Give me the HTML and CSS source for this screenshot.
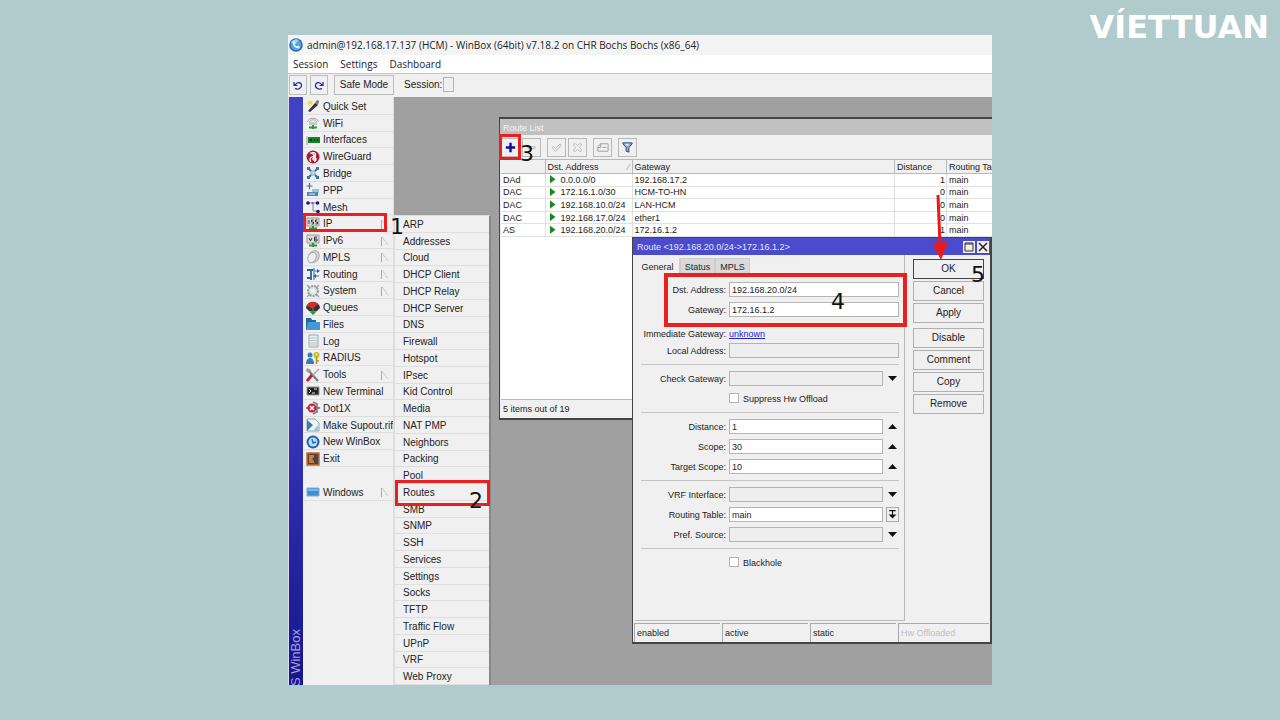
FILE: index.html
```html
<!DOCTYPE html>
<html lang="en">
<head>
<meta charset="utf-8">
<title>WinBox – Static route guide</title>
<link rel="stylesheet" href="styles.css">
</head>
<body>
<div class="brand">VÍETTUAN</div>
<main class="app">
  <header class="titlebar">
    <svg class="app-icon" viewBox="0 0 14 14"><circle cx="7" cy="7" r="6.8" fill="#2470b8"/><circle cx="7" cy="7" r="5.2" fill="#5aa4e2"/><path d="M2 4a6 6 0 0 1 8-2L5 7z" fill="#9fd0f5"/><path d="M4 3.500c-.5 4 2 7 6 7l1-1.500-2-1.500-1 1C6.500 8 6 7 5.500 6l1-1L5.500 3z" fill="#e8f5ff"/></svg>
    <span>admin@192.168.17.137 (HCM) - WinBox (64bit) v7.18.2 on CHR Bochs Bochs (x86_64)</span>
  </header>
  <nav class="menubar"><button>Session</button><button>Settings</button><button>Dashboard</button></nav>
  <div class="toolbar">
    <button class="tool" aria-label="Undo"><svg viewBox="0 0 14 14"><path d="M4 10.500C7 12 11 10 10.500 7S6 3.500 4 7M3 4v3.500h3.500" fill="none" stroke="#2222a8" stroke-width="1.200"/></svg></button>
    <button class="tool" aria-label="Redo"><svg viewBox="0 0 14 14"><path d="M10 10.500C7 12 3 10 3.500 7S8 3.500 10 7M11 4v3.500H7.500" fill="none" stroke="#2222a8" stroke-width="1.200"/></svg></button>
    <button class="safe">Safe Mode</button>
    <label class="session">Session:<input readonly></label>
  </div>
  <div class="workspace">
    <aside class="stripe"><span>RouterOS WinBox</span></aside>
    <nav class="sidebar">
      <button><svg viewBox="0 0 14 14"><path d="M2 12L9 4l3 2-8 7z" fill="#333"/><path d="M9 4l2-3 2 1-1 4z" fill="#777"/><path d="M4 1v6M1 4h6M2 2l4 4M6 2L2 6" stroke="#e6dc3c"/></svg>Quick Set</button>
      <button><svg viewBox="0 0 14 14"><path d="M1.500 6C2 1 12 1 12.500 6M3.500 6c.5-3 6.500-3 7 0" fill="none" stroke="#aaa"/><path d="M3 6h8v3H3z" fill="#c8caca"/><path d="M3 11.500h8M7 9v4" stroke="#299a36" stroke-width="2"/></svg>WiFi</button>
      <button><svg viewBox="0 0 14 14"><path d="M1 3v9" stroke="#999"/><path d="M2 4h12v6H2z" fill="#168221"/><path d="M4 6h2v2H4zm4 0h1v2H8zm3 0h1v2h-1z" fill="#073c0b"/></svg>Interfaces</button>
      <button><svg viewBox="0 0 14 14"><circle cx="7" cy="7" r="6.500" fill="#a91b32"/><path d="M5 12c-2-2-1-4 1-5s3-2 1-3L5 3c3-1 5 0 4.500 2.500S6 8 7 9.500s3-.5 2-2c2 1 1 4-1 4" fill="none" stroke="#fff" stroke-width="1.300"/></svg>WireGuard</button>
      <button><svg viewBox="0 0 14 14"><path d="M2 2l3 3M12 2L9 5M2 12l3-3M12 12L9 9" stroke="#315f91" stroke-width="1.800"/><path d="M1 1h3v3H1zM10 1h3v3h-3zM1 10h3v3H1zM10 10h3v3h-3z" fill="#3f74a8"/><path d="M5 5h4v4H5z" fill="#c3d6e6" stroke="#86aed0"/></svg>Bridge</button>
      <button><svg viewBox="0 0 14 14"><path d="M3.500 0v6M.500 3h6" stroke="#3773a8" stroke-width="1.200"/><path d="M6 6h7v4H6z" fill="#9fc0d8"/><path d="M1 9h11v4H1z" fill="#5289b3"/><path d="M3 11h6" stroke="#dceaf4"/></svg>PPP</button>
      <button><svg viewBox="0 0 14 14"><path d="M2 3h9M7 3v8h5" fill="none" stroke="#888"/><circle cx="2" cy="3" r="1.800" fill="#15158c"/><circle cx="11.500" cy="3" r="1.800" fill="#15158c"/><circle cx="12" cy="11.500" r="1.800" fill="#15158c"/><circle cx="6.500" cy="3" r="1" fill="#5d5dae"/></svg>Mesh</button>
      <button><svg viewBox="0 0 14 14"><path d="M1 1h12v8H1z" fill="#ddd" stroke="#999"/><path d="M3 3v4M7.500 3h-2v2h2v2h-2M11.500 3h-2v2h2v2h-2" fill="none" stroke="#333"/><path d="M3 11.500h8M7 9v4" stroke="#299a36" stroke-width="2"/></svg>IP<i class="more"></i></button>
      <button><svg viewBox="0 0 14 14"><path d="M1 1h12v8H1z" fill="#ddd" stroke="#999"/><path d="M3 4l1.500 3L6 4M11 3H8.500v4H11V5H8.500" fill="none" stroke="#333"/><path d="M3 11.500h8M7 9v4" stroke="#299a36" stroke-width="2"/></svg>IPv6<i class="more"></i></button>
      <button><svg viewBox="0 0 14 14"><ellipse cx="8" cy="6.500" rx="5" ry="6" transform="rotate(25 8 6.500)" fill="#d2d7d8" stroke="#aaa"/><ellipse cx="6" cy="7.500" rx="4" ry="5.500" transform="rotate(25 6 7.500)" fill="#eee" stroke="#a6adad"/></svg>MPLS<i class="more"></i></button>
      <button><svg viewBox="0 0 14 14"><path d="M5 13V3M1 3h7M5 11H1" stroke="#29659c" stroke-width="1.800"/><path d="M8 1v12M8 4h5M13 9H8" stroke="#6f9fc4" stroke-width="1.600"/><path d="M11 2l3 2-3 2M10 7L7 9l3 2" fill="#29659c"/></svg>Routing<i class="more"></i></button>
      <button><svg viewBox="0 0 14 14"><circle cx="7" cy="7" r="5" fill="#d8e2e3" stroke="#8e9d9e" stroke-width="2" stroke-dasharray="2 1"/><path d="M1 1l3 3M13 1l-3 3M1 13l3-3M13 13l-3-3" stroke="#9ba9aa" stroke-width="1.500"/><circle cx="7" cy="7" r="2.500" fill="#f0f0f0"/></svg>System<i class="more"></i></button>
      <button><svg viewBox="0 0 14 14"><path d="M0 7a7 6 0 0 1 14 0l-3 3H3z" fill="#333"/><path d="M1 5a6 5 0 0 1 11-2L7 8z" fill="#d02c32"/><path d="M7 8v3M5 11l2 2 2-2z" fill="#279633" stroke="#279633" stroke-width="1.500"/></svg>Queues</button>
      <button><svg viewBox="0 0 14 14"><path d="M0 1h5l1 2h4v10H0z" fill="#1e68a6"/><path d="M2 5h12v8H0z" fill="#4698d6"/></svg>Files</button>
      <button><svg viewBox="0 0 14 14"><path d="M3 1h9v12H3z" fill="#e6efef" stroke="#9ba7a7"/><path d="M4 4h7M4 6.500h7M4 9h7M4 11h7" stroke="#b4c7c9"/></svg>Log</button>
      <button><svg viewBox="0 0 14 14"><circle cx="4" cy="4" r="2.500" fill="#377ebd"/><path d="M0 13c0-8 8-8 8 0z" fill="#377ebd"/><circle cx="10.500" cy="4" r="3" fill="#d1b82a"/><path d="M10.500 6v7M11 10h2" stroke="#b49918" stroke-width="1.600"/><circle cx="10.500" cy="3.500" r="1" fill="#fff6ae"/></svg>RADIUS</button>
      <button><svg viewBox="0 0 14 14"><path d="M2 2l10 11" stroke="#777" stroke-width="2"/><path d="M13 1L6 8" stroke="#aaa" stroke-width="1.600"/><path d="M6 7l-5 6" stroke="#b71e38" stroke-width="2.800"/><path d="M1 0l4 2-2 3-3-2z" fill="#999"/></svg>Tools<i class="more"></i></button>
      <button><svg viewBox="0 0 14 14"><path d="M1 3h12v8H1z" fill="#222" stroke="#999"/><path d="M3 5l2 2-2 2M6 9h3M8 5h3" fill="none" stroke="#ddd"/></svg>New Terminal</button>
      <button><svg viewBox="0 0 14 14"><path d="M0 7h14M7 1l4 2v8l-4 2" fill="none" stroke="#7d8587" stroke-width="1.800"/><circle cx="6" cy="7" r="4.500" fill="#c82336"/><path d="M4 5l4 4M8 5L4 9" stroke="#fff" stroke-width="1.500"/></svg>Dot1X</button>
      <button><svg viewBox="0 0 14 14"><path d="M1 1h8l4 4v8H1z" fill="#edf5f8" stroke="#91a6b0"/><path d="M1 2l6 5-6 6z" fill="#337cb3"/><path d="M7 13l5-6v6z" fill="#9fc3da"/></svg>Make Supout.rif</button>
      <button><svg viewBox="0 0 14 14"><circle cx="7" cy="7" r="6.500" fill="#1e62a9"/><circle cx="7" cy="7" r="4.500" fill="#b8ddf6"/><path d="M6 4l1 4 3-1" fill="none" stroke="#2471b6" stroke-width="1.400"/></svg>New WinBox</button>
      <button><svg viewBox="0 0 14 14"><path d="M1 1h12v12H1z" fill="#6b3c26" stroke="#ba713c" stroke-width="1.500"/><path d="M3 3h5v8H3z" fill="#d17c32"/><path d="M6 7l4-4v2h2v4h-2v2z" fill="#1c5277"/></svg>Exit</button>
      <span></span>
      <button><svg viewBox="0 0 14 14"><path d="M1 3h12v8H1z" fill="#3991d4" stroke="#8aaec8"/><path d="M2 4h10v2H2z" fill="#72bdf0"/></svg>Windows<i class="more"></i></button>
    </nav>

    <section class="window route-list">
      <h2>Route List</h2>
      <div class="list-tools">
        <button aria-label="Add"><svg viewBox="0 0 14 14"><path d="M7 2v10M2 7h10" stroke="#0b0ba0" stroke-width="2.600"/></svg></button>
        <button aria-label="Remove"><svg viewBox="0 0 14 14"><path d="M3 6h8v2H3z" fill="none" stroke="#bbb"/></svg></button>
        <button class="apart" aria-label="Enable"><svg viewBox="0 0 14 14"><path d="M2 7l2-1 2 2 5-5 1 2-6 6z" fill="none" stroke="#bbb"/></svg></button>
        <button aria-label="Disable"><svg viewBox="0 0 14 14"><path d="M3 3h2l2 2 2-2h2v2L9 7l2 2v2H9L7 9l-2 2H3V9l2-2-2-2z" fill="none" stroke="#bbb"/></svg></button>
        <button class="apart" aria-label="Comment"><svg viewBox="0 0 14 14"><path d="M5 3h8v8H2V6zM5 3v4H2M7 7h4" fill="none" stroke="#999"/></svg></button>
        <button class="apart" aria-label="Filter"><svg viewBox="0 0 14 14"><path d="M2 2h10v1L8.500 7v5l-3-1V7L2 3z" fill="#93a9cb" stroke="#294471"/><path d="M4 3h5L7 6z" fill="#d7e6f6"/></svg></button>
      </div>
      <table>
        <colgroup><col class="c-flag"><col class="c-dst"><col class="c-gw"><col class="c-dist"><col class="c-table"></colgroup>
        <thead><tr><th></th><th>Dst. Address<i class="sort">∕</i></th><th>Gateway</th><th>Distance</th><th>Routing Table</th></tr></thead>
        <tbody>
          <tr><td>DAd</td><td><i class="play"></i>0.0.0.0/0</td><td>192.168.17.2</td><td>1</td><td>main</td></tr>
          <tr><td>DAC</td><td><i class="play"></i>172.16.1.0/30</td><td>HCM-TO-HN</td><td>0</td><td>main</td></tr>
          <tr><td>DAC</td><td><i class="play"></i>192.168.10.0/24</td><td>LAN-HCM</td><td>0</td><td>main</td></tr>
          <tr><td>DAC</td><td><i class="play"></i>192.168.17.0/24</td><td>ether1</td><td>0</td><td>main</td></tr>
          <tr><td>AS</td><td><i class="play"></i>192.168.20.0/24</td><td>172.16.1.2</td><td>1</td><td>main</td></tr>
        </tbody>
      </table>
      <div class="list-body"></div>
      <footer>5 items out of 19</footer>
    </section>

    <section class="window dialog">
      <header><h2>Route &lt;192.168.20.0/24-&gt;172.16.1.2&gt;</h2>
        <button aria-label="Maximize"><svg viewBox="0 0 12 12"><path d="M2 2h8v8H2zM2 3h8" fill="none" stroke="#333"/></svg></button>
        <button aria-label="Close"><svg viewBox="0 0 12 12"><path d="M2 2l8 8M10 2l-8 8" stroke="#222" stroke-width="1.500"/></svg></button>
      </header>
      <div class="dialog-main">
        <div class="pane">
          <div class="tabs" role="tablist"><button role="tab" aria-selected="true">General</button><button role="tab">Status</button><button role="tab">MPLS</button></div>
          <form class="form">
            <div class="group">
              <div class="row"><label for="dst">Dst. Address:</label><input class="wide" id="dst" value="192.168.20.0/24"></div>
              <div class="row"><label for="gw">Gateway:</label><input class="wide" id="gw" value="172.16.1.2"></div>
              <div class="row link-row"><span>Immediate Gateway:</span><a href="#">unknown</a></div>
              <div class="row"><label for="local">Local Address:</label><input class="wide off" id="local" readonly></div>
            </div>
            <div class="group">
              <div class="row"><label for="check">Check Gateway:</label><select class="off" id="check"><option></option></select><i class="down"></i></div>
              <div class="row"><input type="checkbox" id="hw"><label class="tick" for="hw">Suppress Hw Offload</label></div>
            </div>
            <div class="group">
              <div class="row"><label for="distance">Distance:</label><input id="distance" value="1"><button type="button" class="up" aria-label="Clear distance"></button></div>
              <div class="row"><label for="scope">Scope:</label><input id="scope" value="30"><button type="button" class="up" aria-label="Clear scope"></button></div>
              <div class="row"><label for="target">Target Scope:</label><input id="target" value="10"><button type="button" class="up" aria-label="Clear target scope"></button></div>
            </div>
            <div class="group">
              <div class="row"><label for="vrf">VRF Interface:</label><select class="off" id="vrf"><option></option></select><i class="down"></i></div>
              <div class="row"><label for="rt">Routing Table:</label><select id="rt"><option>main</option></select><svg class="pick" viewBox="0 0 14 14"><path d="M3 2h8M7 3v5" stroke="#111" stroke-width="1.500"/><path d="M2 7h10l-5 5z" fill="#111"/></svg></div>
              <div class="row"><label for="pref">Pref. Source:</label><select class="off" id="pref"><option></option></select><i class="down"></i></div>
            </div>
            <div class="group">
              <div class="row"><input type="checkbox" id="bh"><label class="tick" for="bh">Blackhole</label></div>
            </div>
          </form>
        </div>
        <div class="actions">
          <button class="default">OK</button><button>Cancel</button><button>Apply</button>
          <button class="split">Disable</button><button>Comment</button><button>Copy</button><button>Remove</button>
        </div>
      </div>
      <footer class="status"><span>enabled</span><span>active</span><span>static</span><span class="dim">Hw Offloaded</span></footer>
    </section>

    <nav class="submenu">
      <button>ARP</button><button>Addresses</button><button>Cloud</button><button>DHCP Client</button><button>DHCP Relay</button><button>DHCP Server</button><button>DNS</button><button>Firewall</button><button>Hotspot</button><button>IPsec</button><button>Kid Control</button><button>Media</button><button>NAT PMP</button><button>Neighbors</button><button>Packing</button><button>Pool</button><button>Routes</button><button>SMB</button><button>SNMP</button><button>SSH</button><button>Services</button><button>Settings</button><button>Socks</button><button>TFTP</button><button>Traffic Flow</button><button>UPnP</button><button>VRF</button><button>Web Proxy</button>
    </nav>

    <div class="mark mark-ip"></div><b class="step step-1">1</b>
    <div class="mark mark-routes"></div><b class="step step-2">2</b>
    <div class="mark mark-add"></div><b class="step step-3">3</b>
    <div class="mark mark-fields"></div><b class="step step-4">4</b>
    <svg class="arrow" viewBox="0 0 18 66"><path d="M7 0l2 50" stroke="#e8191f" stroke-width="3"/><path d="M1 48l16-1-7 18z" fill="#e8191f"/></svg>
    <b class="step step-5">5</b>
  </div>
</main>
</body>
</html>
```
FILE: styles.css
```css
* { box-sizing: border-box; }
body {
  margin: 0;
  min-height: 100vh;
  padding: 35px 0;
  display: flex;
  justify-content: center;
  background: #b1cacb;
  color: #222;
  font: 10px/12px "Liberation Sans", Arial, sans-serif;
}
button, input, select { font: inherit; color: inherit; margin: 0; padding: 0; border: 0; border-radius: 0; background: none; }
i { font-style: normal; }
h2 { margin: 0; font: inherit; }
svg { display: block; }

.brand {
  position: absolute;
  top: 7px;
  right: 11px;
  color: #fff;
  font: bold 32px/40px "DejaVu Sans", sans-serif;
}

.app { width: 55%; display: flex; flex-direction: column; overflow: hidden; background: #f0f0f0; }
.titlebar { height: 20px; display: flex; align-items: center; gap: 4px; padding-left: 1px; background: #f4f4f4; font: 10px/16px "Open Sans", sans-serif; white-space: nowrap; }
.app-icon { width: 14px; height: 14px; }
.menubar { height: 18px; display: flex; gap: 12px; padding-left: 5px; background: #fff; font: 10px/16px "Open Sans", sans-serif; }
.toolbar { height: 24px; display: flex; align-items: center; gap: 3px; padding: 0 0 2px 1px; border-top: 1px solid #c4c4c4; }
.tool, .safe { height: 20px; border: 1px solid #bcbcbc; }
.tool { width: 18px; padding: 1px; }
.safe { width: 60px; margin-left: 3px; }
.session { display: flex; align-items: center; gap: 1px; margin-left: 7px; }
.session input { width: 11px; height: 15px; border: 1px solid #b4b4b4; }

.workspace { position: relative; flex: 1; display: flex; overflow: hidden; background: #a0a0a0; }
.stripe { width: 15px; display: flex; flex-direction: column; align-items: center; overflow: hidden; border-left: 1px solid #dde; background: linear-gradient(#4141c6 0%, #3c3cc0 45%, #15158c 100%); }
.stripe span { margin: auto 0 -50px; writing-mode: vertical-rl; transform: rotate(180deg); color: #a2a2d8; font-size: 13px; line-height: 14px; white-space: nowrap; }

.sidebar { width: 91px; display: grid; grid-template-rows: repeat(35, minmax(0, 1fr)); padding: 1px 0 0 1px; background: #f0f0f0; border-right: 1px solid #ddd; }
.sidebar button, .submenu button { display: flex; align-items: center; padding-top: 2px; text-align: left; white-space: nowrap; border-bottom: 1px solid #dedede; min-height: 0; overflow: hidden; }
.sidebar button { gap: 3px; padding-left: 2px; }
.sidebar svg { width: 14px; height: 14px; flex: none; margin: -2px 0 -1px; }
.more { width: 7px; height: 9px; margin: 0 5px 0 auto; border-left: 1px solid #aaa; background: linear-gradient(55deg, transparent 48%, #bbb 50%, transparent 60%); }
.submenu { position: absolute; left: 106px; top: 118px; bottom: 0; width: 97px; display: grid; grid-auto-rows: minmax(0, 1fr); background: #f0f0f0; border: 1px solid #ddd; border-right: 2px solid #888; border-bottom: 0; }
.submenu button { padding-left: 8px; }

.window { position: absolute; display: flex; flex-direction: column; background: #f0f0f0; border: 1px solid #333; font-size: 9px; }
.route-list { left: 211px; top: 20px; right: -30px; height: 303px; border-width: 2px 1px; border-color: #444; }
.route-list h2 { height: 16px; padding: 3px 3px 0; background: #c0c0c0; color: #f6f6f6; }
.list-tools { height: 24px; display: flex; align-items: center; gap: 2px; padding-left: 1px; }
.list-tools button { width: 19px; height: 19px; border: 1px solid #b8b8b8; padding: 2px; }
.list-tools .apart { margin-left: 4px; }
table { height: 78px; margin-left: 1px; border-collapse: collapse; table-layout: fixed; width: 100%; background: #fff; line-height: 10px; }
.c-flag { width: 44px; }
.c-dst { width: 87px; }
.c-dist { width: 52px; }
.c-table { width: 75px; }
th, td { padding: 0 2px; text-align: left; font-weight: normal; white-space: nowrap; overflow: hidden; border-right: 1px solid #e0dede; border-bottom: 1px solid #e4e0dc; }
th { height: 14px; background: #f0f0f0; border-color: #b8b8b8; border-top: 1px solid #b8b8b8; }
td:nth-child(4) { text-align: right; padding-right: 1px; }
.sort { float: right; color: #999; }
.play { display: inline-block; width: 6px; height: 9px; margin: 0 5px 0 2px; vertical-align: -1px; background: #188a1b; clip-path: polygon(0 0, 100% 50%, 0 100%); }
.list-body { flex: 1; margin-left: 1px; background: #fff; border-bottom: 1px solid #bbb; }
.route-list footer { height: 18px; padding: 3px; }

.dialog { left: 344px; top: 140px; right: 0; height: 407px; border: 1px solid #444; border-width: 1px 2px 2px 1px; }
.dialog > header { height: 17px; display: flex; align-items: center; gap: 2px; padding: 0 1px 0 4px; background: #4b4bcd; color: #e6e6ff; }
.dialog h2 { flex: 1; }
.dialog > header button { width: 12px; height: 12px; background: #eee; }
.dialog-main { flex: 1; display: flex; gap: 8px; padding: 0 6px 0 2px; }
.pane { flex: 1; padding-top: 3px; border-right: 1px solid #bbb; border-bottom: 1px solid #bbb; }
.tabs { height: 16px; display: flex; }
.tabs button { width: 35px; background: #dadada; border: 1px solid #ccc; border-bottom: 0; }
.tabs button:first-child { width: 45px; background: #f0f0f0; border-color: #f0f0f0 #ccc #f0f0f0 #f0f0f0; }
.form { padding: 2px 5px 0 6px; }
.group { display: flex; flex-direction: column; gap: 5px; padding: 6px 0; border-bottom: 1px solid #c4c4c4; }
.group:last-child { border: 0; }
.row { display: grid; grid-template-columns: 85px 1fr 13px; gap: 3px; align-items: center; }
.row > label, .row > span { text-align: right; white-space: nowrap; }
.row input, .row select { width: 100%; min-width: 0; height: 15px; padding: 0 2px; background: #fff; border: 1px solid #b4b4b4; appearance: none; }
.row .wide { grid-column: 2 / 4; }
.row .off { background: #eee; }
.link-row { height: 10px; margin-top: 6px; }
.row a { color: #2222dd; }
.row input[type="checkbox"] { grid-column: 2; grid-row: 1; width: 10px; height: 10px; margin: 2px 0 3px; padding: 0; }
.row .tick { grid-column: 2 / 4; grid-row: 1; padding-left: 14px; text-align: left; }
.up, .down { width: 9px; height: 5px; justify-self: center; background: #111; }
.up { clip-path: polygon(50% 0, 100% 100%, 0 100%); }
.down { clip-path: polygon(0 0, 100% 0, 50% 100%); }
.pick { width: 13px; height: 15px; border: 1px solid #aaa; }
.actions { width: 71px; display: flex; flex-direction: column; gap: 2px; padding-top: 4px; }
.actions button { height: 20px; border: 1px solid #b0b0b0; font-size: 10px; }
.actions .default { border-color: #444; }
.actions .split { margin-top: 3px; }
.status { height: 21px; display: grid; grid-template-columns: 86px 86px 86px 1fr; gap: 2px; padding: 2px 1px 1px; }
.status span { padding: 3px 2px; border-top: 1px solid #aaa; border-left: 1px solid #aaa; }
.status .dim { color: #c0c0c0; }

.mark { position: absolute; border: 3px solid #e9201f; pointer-events: none; }
.mark-ip { left: 15px; top: 116px; width: 84px; height: 19px; }
.mark-routes { left: 107px; top: 383px; width: 95px; height: 26px; }
.mark-add { left: 211px; top: 37px; width: 22px; height: 26px; }
.mark-fields { left: 376px; top: 176px; width: 243px; height: 54px; border-width: 4px; }
.step { position: absolute; color: #111; font: 22px/24px "DejaVu Sans", sans-serif; pointer-events: none; }
.step-1 { left: 102px; top: 118px; }
.step-2 { left: 181px; top: 392px; }
.step-3 { left: 232px; top: 45px; }
.step-4 { left: 543px; top: 193px; }
.step-5 { left: 683px; top: 166px; }
.arrow { position: absolute; left: 643px; top: 98px; width: 18px; height: 66px; }
```
